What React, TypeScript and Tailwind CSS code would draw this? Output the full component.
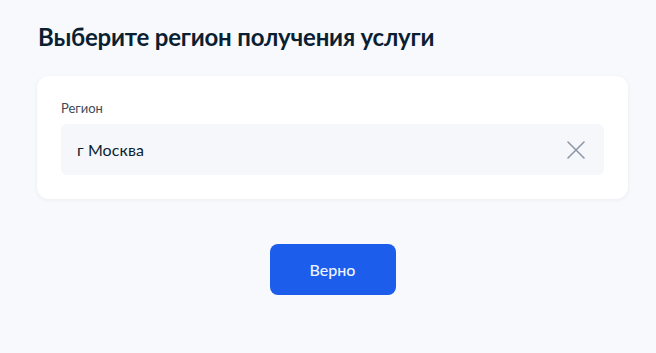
import React, { useState } from 'react';

const ClearIcon = () => (
  <svg width="20" height="20" viewBox="0 0 20 20" fill="none">
    <path d="M2 2L18 18M18 2L2 18" stroke="#8c98a8" strokeWidth="1.6" strokeLinecap="round" />
  </svg>
);

export default function App() {
  const [region, setRegion] = useState('г Москва');

  return (
    <div className="min-h-screen w-full bg-[#f8f9fc] font-['Lato','Noto_Sans',sans-serif] text-[#0b1f33]">
      <div className="px-[37px] pt-[22px]">
        <h1 className="text-[24px] leading-[30px] font-bold tracking-[-0.2px] pl-[1px]">
          Выберите регион получения услуги
        </h1>

        {/* Region card */}
        <div className="mt-[24px] w-[591px] rounded-[12px] bg-white px-[24px] pt-[24px] pb-[24px] shadow-[0_1px_4px_rgba(11,31,51,0.06)]">
          <div className="text-[13px] leading-[16px] text-[#3f4a56] mb-[8px]">Регион</div>
          <div className="flex h-[51px] items-center justify-between rounded-[6px] bg-[#f5f7fa] pl-[16px] pr-[18px]">
            <span className="text-[16px] leading-[20px] text-[#0b1f33] tracking-[0.1px]">{region}</span>
            <button type="button" onClick={() => setRegion('')} className="flex items-center justify-center">
              <ClearIcon />
            </button>
          </div>
        </div>

        <div className="flex justify-center mt-[45px] w-[591px]">
          <button
            type="button"
            className="h-[51px] w-[126px] rounded-[8px] bg-[#1d5deb] text-[16px] font-medium text-[#eef4ff]"
          >
            Верно
          </button>
        </div>
      </div>
    </div>
  );
}
